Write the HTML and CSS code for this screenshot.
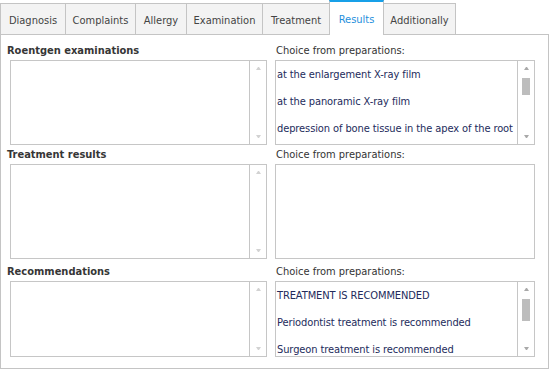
FILE: index.html
```html
<!DOCTYPE html>
<html lang="en">
<head>
  <meta charset="utf-8">
  <title>Results</title>
  <link rel="stylesheet" href="styles.css">
</head>
<body>
  <nav class="tabs">
    <div class="tab diagnosis">Diagnosis</div>
    <div class="tab complaints">Complaints</div>
    <div class="tab allergy">Allergy</div>
    <div class="tab examination">Examination</div>
    <div class="tab treatment">Treatment</div>
    <div class="tab results active">Results</div>
    <div class="tab additionally">Additionally</div>
  </nav>

  <main class="panel">
    <div class="row first">
      <div class="field">
        <div class="caption bold">Roentgen examinations</div>
        <div class="box memo h1">
          <div class="content"></div>
          <div class="vscroll off"><i class="up"></i><i class="down"></i></div>
        </div>
      </div>
      <div class="field right">
        <div class="caption">Choice from preparations:</div>
        <div class="box list h1">
          <ul class="content">
            <li>at the enlargement X-ray film</li>
            <li>at the panoramic X-ray film</li>
            <li>depression of bone tissue in the apex of the root</li>
          </ul>
          <div class="vscroll"><i class="up"></i><b class="thumb"></b><i class="down"></i></div>
        </div>
      </div>
    </div>

    <div class="row second">
      <div class="field">
        <div class="caption bold">Treatment results</div>
        <div class="box memo h2">
          <div class="content"></div>
          <div class="vscroll off"><i class="up"></i><i class="down"></i></div>
        </div>
      </div>
      <div class="field right">
        <div class="caption">Choice from preparations:</div>
        <div class="box list h2">
          <ul class="content"></ul>
        </div>
      </div>
    </div>

    <div class="row third">
      <div class="field">
        <div class="caption bold">Recommendations</div>
        <div class="box memo h3">
          <div class="content"></div>
          <div class="vscroll off"><i class="up"></i><i class="down"></i></div>
        </div>
      </div>
      <div class="field right">
        <div class="caption">Choice from preparations:</div>
        <div class="box list h3">
          <ul class="content">
            <li>TREATMENT IS RECOMMENDED</li>
            <li>Periodontist treatment is recommended</li>
            <li>Surgeon treatment is recommended</li>
          </ul>
          <div class="vscroll"><i class="up"></i><b class="thumb tall"></b><i class="down"></i></div>
        </div>
      </div>
    </div>
  </main>
</body>
</html>
```

FILE: styles.css
```css
* {
  box-sizing: border-box;
}
body {
  margin: 0;
  font: 11px "DejaVu Sans Condensed", "DejaVu Sans", sans-serif;
  color: #333;
  background: #fff;
}

/* tabs */
.tabs {
  display: flex;
  align-items: flex-end;
  height: 34px;
}
.tab {
  height: 31px;
  padding-top: 2px;
  line-height: 30px;
  text-align: center;
  border: 1px solid #c4c4c4;
  border-bottom: 0;
  background: #f3f3f3;
  color: #444;
  white-space: nowrap;
}
.tab + .tab {
  margin-left: -1px;
}
.tab.active {
  position: relative;
  z-index: 1;
  height: 35px;
  margin-bottom: -1px;
  border-top: 2px solid #18a0e8;
  background: #fff;
  color: #1f8fdc;
  line-height: 32px;
}
.tab.diagnosis    { width: 66px; }
.tab.complaints   { width: 71px; }
.tab.allergy      { width: 52px; }
.tab.examination  { width: 77px; }
.tab.treatment    { width: 68px; }
.tab.results      { width: 55px; }
.tab.additionally { width: 73px; }

/* panel */
.panel {
  height: 335px;
  width: 549px;
  padding: 9px 13px 11px 6px;
  border: 1px solid #c4c4c4;
}
.row {
  display: flex;
  gap: 8px;
}
.row.second { margin-top: 3px; }
.row.third  { margin-top: 6px; }

.field {
  width: 260px;
}
.field.right {
  padding-left: 1px;
}
.caption {
  line-height: 14px;
  margin-bottom: 2px;
  white-space: nowrap;
}
.caption.bold {
  font-weight: bold;
  color: #363636;
}

.box {
  display: flex;
  border: 1px solid #c6c6c6;
  background: #fff;
}
.memo {
  margin-left: 3px;
  width: 257px;
}
.list {
  margin-left: -1px;
  width: 260px;
}
.h1 { height: 85px; }
.h2 { height: 95px; }
.h3 { height: 76px; }

.content {
  flex: 1;
  margin: 0;
  padding: 0 0 0 1px;
  list-style: none;
  overflow: hidden;
}
.content li {
  line-height: 27px;
  color: #232b5c;
  letter-spacing: -0.1px;
  white-space: nowrap;
}

/* scrollbar */
.vscroll {
  width: 17px;
  border-left: 1px solid #c6c6c6;
  display: flex;
  flex-direction: column;
  align-items: center;
}
.vscroll i {
  display: block;
  width: 1px;
  height: 3px;
  border-left: 2px solid transparent;
  border-right: 2px solid transparent;
  box-sizing: content-box;
}
.vscroll .up {
  height: 0;
  margin-top: 6px;
  border-bottom: 3px solid #a9a9a9;
}
.vscroll .down {
  height: 0;
  margin-top: auto;
  margin-bottom: 6px;
  border-top: 3px solid #a9a9a9;
}
.vscroll.off .up   { border-bottom-color: #d2d2d2; }
.vscroll.off .down { border-top-color: #d2d2d2; }

.thumb {
  display: block;
  width: 8px;
  height: 17px;
  margin-top: 8px;
  background: #bdbdbd;
}
.thumb.tall {
  height: 22px;
}
```
